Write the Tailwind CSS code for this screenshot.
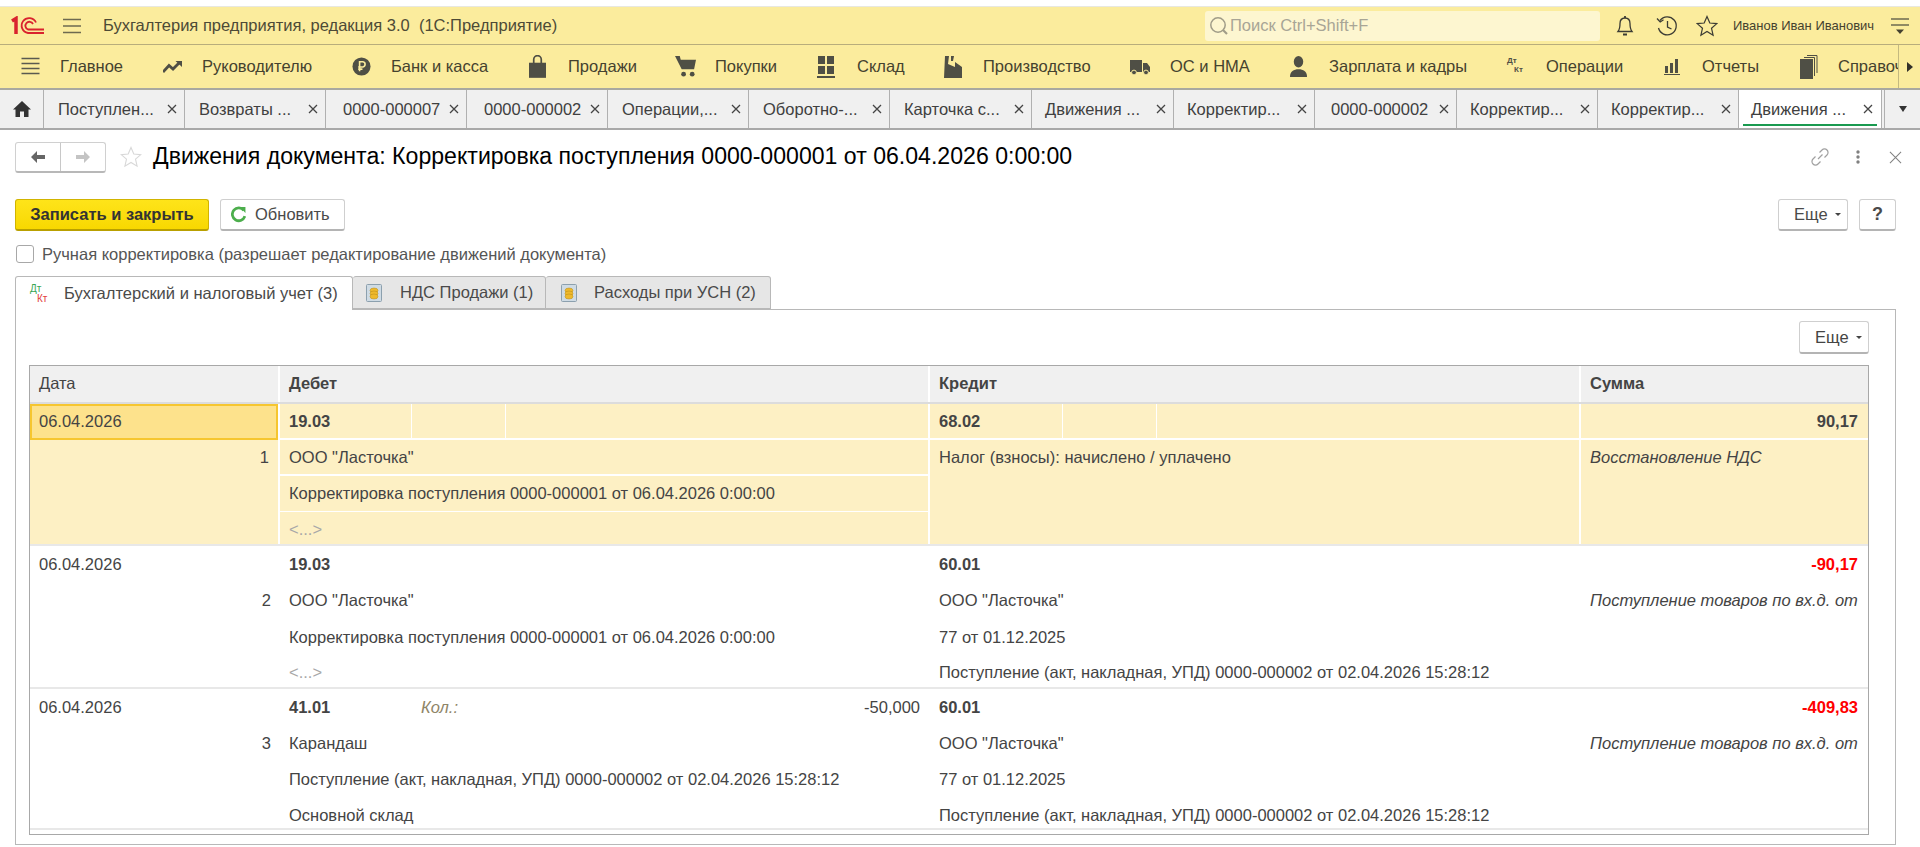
<!DOCTYPE html>
<html lang="ru">

<head>
    <meta charset="UTF-8">
    <title>Бухгалтерия предприятия</title>
    <script src="https://cdn.jsdelivr.net/npm/@tailwindcss/browser@4"></script>
</head>

<body class="font-['Liberation_Sans',Arial,sans-serif] text-[#4a4a4a] bg-white overflow-hidden">
    <div class="h-[847px] w-[1920px] flex flex-col">
        <div class="h-[6px] bg-white"></div>

        <!-- top bar -->
        <div class="h-[39px] bg-[#fbec9d] border-t border-t-[#e8e8e0] border-b border-b-[#b8ad7c] flex items-center shrink-0">
            <svg viewBox="0 0 34 20" class="w-[34px] h-[20px] ml-[11px]" fill="none" stroke="#d9232e">
                <path d="M1 5 L5 2.5 V18" stroke-width="3.5" />
                <path d="M25 6.5 A7.5 7.5 0 1 0 17 17 H33" stroke-width="1.8" />
                <path d="M22 8 A4 4 0 1 0 17 13.5 H33" stroke-width="1.8" />
            </svg>
            <svg viewBox="0 0 18 16" class="w-[18px] h-[16px] ml-[18px]" stroke="#6e6a50" stroke-width="1.5">
                <path d="M0 1.5H18M0 8H18M0 14.5H18" />
            </svg>
            <div class="ml-[22px] text-[16.5px] text-[#4d4a36] whitespace-pre">Бухгалтерия предприятия, редакция 3.0  (1С:Предприятие)</div>
            <div class="ml-auto w-[395px] h-[30px] bg-[#fdf6d0] rounded-[3px] flex items-center pl-[4px] text-[16.5px] text-[#a8a596]">
                <svg viewBox="0 0 20 20" class="w-[20px] h-[20px]" fill="none" stroke="#a09c88" stroke-width="1.5">
                    <circle cx="9" cy="9" r="7.2" />
                    <path d="M14 14 L18 18" stroke-width="2.2" />
                </svg>
                <span class="ml-[1px]">Поиск Ctrl+Shift+F</span>
            </div>
            <svg viewBox="0 0 20 22" class="w-[20px] h-[22px] ml-[15px]" fill="none" stroke="#3c3c34" stroke-width="1.3">
                <path d="M3 16.5 C5 14 5 11 5 8.5 C5 5 7 3 10 3 C13 3 15 5 15 8.5 C15 11 15 14 17 16.5 Z" />
                <path d="M10 1V3M8 19.5H12" stroke-width="1.8" />
            </svg>
            <svg viewBox="0 0 22 22" class="w-[22px] h-[22px] ml-[21px]" fill="none" stroke="#3c3c34" stroke-width="1.3">
                <path d="M4 5.5 A9 9 0 1 1 2.5 13" />
                <path d="M1 3.5 L4.2 7 L7.5 4.8" />
                <path d="M11.5 6V12L15.5 14" />
            </svg>
            <svg viewBox="0 0 22 22" class="w-[22px] h-[22px] ml-[18px]" fill="none" stroke="#3c3c34" stroke-width="1.2">
                <path d="M11 1.5 L13.8 8 L20.8 8.6 L15.5 13.2 L17.1 20.2 L11 16.5 L4.9 20.2 L6.5 13.2 L1.2 8.6 L8.2 8 Z" />
            </svg>
            <div class="ml-[15px] w-[158px] text-[13px] text-[#45422f] whitespace-nowrap">Иванов Иван Иванович</div>
            <svg viewBox="0 0 18 18" class="w-[18px] h-[18px] mr-[11px]" stroke="#6e6a50" stroke-width="1.5">
                <path d="M0 2H18M0 8H18" />
                <path d="M5 12.5H13L9 17Z" fill="#45422f" stroke="none" />
            </svg>
        </div>

        <!-- sections -->
        <div class="h-[45px] bg-[#fbec9d] border-b-2 border-b-[#a9a9a0] flex items-center text-[16.5px] text-[#45422f] shrink-0 pl-[21px] relative">
            <div class="w-[142px] flex items-center shrink-0">
                <svg viewBox="0 0 18 20" class="w-[19px] h-[20px]" stroke="#5a5a50" stroke-width="1.5">
                    <path d="M0 1.5H18M0 6.5H18M0 11.5H18M0 16.5H18" />
                </svg>
                <span class="ml-[20px]">Главное</span>
            </div>
            <div class="w-[189px] flex items-center shrink-0">
                <svg viewBox="0 0 20 20" class="w-[20px] h-[20px]" fill="none" stroke="#4f4f45" stroke-width="2.8">
                    <path d="M0 15 L6 8.5 L10 12 L17 5" />
                    <path d="M12.5 4H19V10" fill="#4f4f45" stroke="none" />
                </svg>
                <span class="ml-[19px]">Руководителю</span>
            </div>
            <div class="w-[177px] flex items-center shrink-0">
                <svg viewBox="0 0 20 20" class="w-[19px] h-[19px]">
                    <circle cx="10" cy="10" r="9.5" fill="#4f4f45" />
                    <path d="M8 15V5H11.5A2.8 2.8 0 0 1 11.5 10.5H6.5M6.5 12.8H11" fill="none" stroke="#fbec9d" stroke-width="1.7" />
                </svg>
                <span class="ml-[20px]">Банк и касса</span>
            </div>
            <div class="w-[146px] flex items-center shrink-0">
                <svg viewBox="0 0 18 24" class="w-[17px] h-[23px]">
                    <path d="M0 8H18V24H0Z" fill="#4f4f45" />
                    <path d="M5 11V4.5A4 4 0 0 1 13 4.5V11" fill="none" stroke="#4f4f45" stroke-width="1.8" />
                </svg>
                <span class="ml-[22px]">Продажи</span>
            </div>
            <div class="w-[142px] flex items-center shrink-0">
                <svg viewBox="0 0 22 22" class="w-[21px] h-[21px]">
                    <path d="M0 0H5L6 4H22L20 14H7Z" fill="#4f4f45" />
                    <circle cx="9" cy="19" r="2.5" fill="#4f4f45" />
                    <circle cx="18" cy="19" r="2.5" fill="#4f4f45" />
                </svg>
                <span class="ml-[19px]">Покупки</span>
            </div>
            <div class="w-[127px] flex items-center shrink-0">
                <svg viewBox="0 0 18 22" class="w-[18px] h-[22px]" fill="#4f4f45">
                    <path d="M1 0H8V8H1ZM10 0H17V8H10ZM1 10H8V18H1ZM10 10H17V18H10ZM0 20H18V22H0Z" />
                </svg>
                <span class="ml-[22px]">Склад</span>
            </div>
            <div class="w-[186px] flex items-center shrink-0">
                <svg viewBox="0 0 18 22" class="w-[18px] h-[22px]" fill="#4f4f45">
                    <path d="M1 0H5L4 8L11 11V6L18 11V22H0Z" />
                    <path d="M7 0H10L9 5H7Z" />
                </svg>
                <span class="ml-[21px]">Производство</span>
            </div>
            <div class="w-[160px] flex items-center shrink-0">
                <svg viewBox="0 0 20 16" class="w-[20px] h-[16px]" fill="#4f4f45">
                    <path d="M0 1H12V13H0ZM13 4H17L20 8V13H13Z" />
                    <circle cx="4" cy="13.5" r="2.4" stroke="#fbec9d" />
                    <circle cx="16" cy="13.5" r="2.4" stroke="#fbec9d" />
                </svg>
                <span class="ml-[20px]">ОС и НМА</span>
            </div>
            <div class="w-[217px] flex items-center shrink-0">
                <svg viewBox="0 0 18 22" class="w-[17px] h-[21px]" fill="#4f4f45">
                    <ellipse cx="9" cy="6" rx="5" ry="6" />
                    <path d="M0 22C0 16 4 14 9 14C14 14 18 16 18 22Z" />
                </svg>
                <span class="ml-[22px]">Зарплата и кадры</span>
            </div>
            <div class="w-[157px] flex items-center shrink-0">
                <div class="w-[18px] h-[22px] text-[8px] font-bold leading-[9px] text-[#4f4f45]">
                    <div>Дт</div>
                    <div class="pl-[7px]">Кт</div>
                </div>
                <span class="ml-[21px]">Операции</span>
            </div>
            <div class="w-[136px] flex items-center shrink-0">
                <svg viewBox="0 0 16 16" class="w-[16px] h-[16px]" fill="#4f4f45">
                    <path d="M1 7H4V14H1ZM6 4H9V14H6ZM11 0H14V14H11ZM0 15H16V16H0Z" />
                </svg>
                <span class="ml-[22px]">Отчеты</span>
            </div>
            <div class="flex items-center shrink-0">
                <svg viewBox="0 0 18 24" class="w-[18px] h-[24px]">
                    <path d="M0 4H13V24H0Z" fill="#4f4f45" />
                    <path d="M14.5 21V2.5H4M17 18V0.5H7" fill="none" stroke="#4f4f45" />
                </svg>
                <span class="ml-[20px] w-[60px] overflow-hidden whitespace-nowrap">Справочники</span>
            </div>
            <div class="absolute right-0 top-0 bottom-0 w-[22px] bg-[#fbec9d] border-l border-l-[#c4b97f] flex items-center justify-center">
                <svg viewBox="0 0 6 10" class="w-[6px] h-[10px]" fill="#33312a">
                    <path d="M0 0L6 5L0 10Z" />
                </svg>
            </div>
        </div>

        <!-- open tabs -->
        <div class="h-[40px] bg-[#f0f0f0] border-b-2 border-b-[#a9a9a9] flex text-[16.5px] text-[#404040] shrink-0 whitespace-nowrap">
            <div class="w-[44px] border-r border-r-[#b0b0b0] flex items-center justify-center">
                <svg viewBox="0 0 18 16" class="w-[18px] h-[16px]" fill="#333">
                    <path d="M9 0L18 8.5H15.5V16H11V10.5H7V16H2.5V8.5H0Z" />
                </svg>
            </div>
            <div class="w-[141px] border-r border-r-[#b0b0b0] flex items-center justify-between pl-[14px] pr-[7px]"><span>Поступлен...</span><svg viewBox="0 0 10 10" class="w-[10px] h-[10px]" stroke="#444" stroke-width="1.3"><path d="M1 1L9 9M9 1L1 9" /></svg></div>
            <div class="w-[141px] border-r border-r-[#b0b0b0] flex items-center justify-between pl-[14px] pr-[7px]"><span>Возвраты ...</span><svg viewBox="0 0 10 10" class="w-[10px] h-[10px]" stroke="#444" stroke-width="1.3"><path d="M1 1L9 9M9 1L1 9" /></svg></div>
            <div class="w-[141px] border-r border-r-[#b0b0b0] flex items-center justify-between pl-[17px] pr-[7px]"><span>0000-000007</span><svg viewBox="0 0 10 10" class="w-[10px] h-[10px]" stroke="#444" stroke-width="1.3"><path d="M1 1L9 9M9 1L1 9" /></svg></div>
            <div class="w-[141px] border-r border-r-[#b0b0b0] flex items-center justify-between pl-[17px] pr-[7px]"><span>0000-000002</span><svg viewBox="0 0 10 10" class="w-[10px] h-[10px]" stroke="#444" stroke-width="1.3"><path d="M1 1L9 9M9 1L1 9" /></svg></div>
            <div class="w-[141px] border-r border-r-[#b0b0b0] flex items-center justify-between pl-[14px] pr-[7px]"><span>Операции,...</span><svg viewBox="0 0 10 10" class="w-[10px] h-[10px]" stroke="#444" stroke-width="1.3"><path d="M1 1L9 9M9 1L1 9" /></svg></div>
            <div class="w-[141px] border-r border-r-[#b0b0b0] flex items-center justify-between pl-[14px] pr-[7px]"><span>Оборотно-...</span><svg viewBox="0 0 10 10" class="w-[10px] h-[10px]" stroke="#444" stroke-width="1.3"><path d="M1 1L9 9M9 1L1 9" /></svg></div>
            <div class="w-[142px] border-r border-r-[#b0b0b0] flex items-center justify-between pl-[14px] pr-[7px]"><span>Карточка с...</span><svg viewBox="0 0 10 10" class="w-[10px] h-[10px]" stroke="#444" stroke-width="1.3"><path d="M1 1L9 9M9 1L1 9" /></svg></div>
            <div class="w-[142px] border-r border-r-[#b0b0b0] flex items-center justify-between pl-[13px] pr-[7px]"><span>Движения ...</span><svg viewBox="0 0 10 10" class="w-[10px] h-[10px]" stroke="#444" stroke-width="1.3"><path d="M1 1L9 9M9 1L1 9" /></svg></div>
            <div class="w-[141px] border-r border-r-[#b0b0b0] flex items-center justify-between pl-[13px] pr-[7px]"><span>Корректир...</span><svg viewBox="0 0 10 10" class="w-[10px] h-[10px]" stroke="#444" stroke-width="1.3"><path d="M1 1L9 9M9 1L1 9" /></svg></div>
            <div class="w-[142px] border-r border-r-[#b0b0b0] flex items-center justify-between pl-[16px] pr-[7px]"><span>0000-000002</span><svg viewBox="0 0 10 10" class="w-[10px] h-[10px]" stroke="#444" stroke-width="1.3"><path d="M1 1L9 9M9 1L1 9" /></svg></div>
            <div class="w-[141px] border-r border-r-[#b0b0b0] flex items-center justify-between pl-[13px] pr-[7px]"><span>Корректир...</span><svg viewBox="0 0 10 10" class="w-[10px] h-[10px]" stroke="#444" stroke-width="1.3"><path d="M1 1L9 9M9 1L1 9" /></svg></div>
            <div class="w-[141px] border-r border-r-[#b0b0b0] flex items-center justify-between pl-[13px] pr-[7px]"><span>Корректир...</span><svg viewBox="0 0 10 10" class="w-[10px] h-[10px]" stroke="#444" stroke-width="1.3"><path d="M1 1L9 9M9 1L1 9" /></svg></div>
            <div class="w-[143px] bg-white border-r border-r-[#b0b0b0] flex items-center justify-between pl-[12px] pr-[8px] relative"><span>Движения ...</span><svg viewBox="0 0 10 10" class="w-[10px] h-[10px]" stroke="#444" stroke-width="1.3"><path d="M1 1L9 9M9 1L1 9" /></svg><div class="absolute left-[4px] right-[4px] bottom-[2px] h-[2px] bg-[#1a9a50]"></div></div>
            <div class="flex-1 border-l border-l-[#b0b0b0] ml-[2px] flex items-center justify-center">
                <svg viewBox="0 0 8 6" class="w-[8px] h-[6px]" fill="#333"><path d="M0 0H8L4 6Z" /></svg>
            </div>
        </div>

        <!-- form -->
        <div class="flex-1 flex flex-col px-[15px] pr-[24px] relative">
            <div class="h-[54px] flex items-center shrink-0">
                <div class="w-[91px] h-[31px] border border-[#d0d0d0] border-b-2 border-b-[#b8b8b8] rounded-[3px] flex shrink-0">
                    <div class="w-[45px] border-r border-r-[#c8c8c8] flex items-center justify-center">
                        <svg viewBox="0 0 14 12" class="w-[14px] h-[12px]" fill="#666"><path d="M0 6L6 0V4H14V8H6V12Z" /></svg>
                    </div>
                    <div class="flex-1 flex items-center justify-center">
                        <svg viewBox="0 0 14 12" class="w-[14px] h-[12px]" fill="#c4c4c4"><path d="M14 6L8 0V4H0V8H8V12Z" /></svg>
                    </div>
                </div>
                <svg viewBox="0 0 22 22" class="w-[22px] h-[22px] ml-[14px]" fill="none" stroke="#d8d8d8" stroke-width="1.1">
                    <path d="M11 1.5 L13.8 8 L20.8 8.6 L15.5 13.2 L17.1 20.2 L11 16.5 L4.9 20.2 L6.5 13.2 L1.2 8.6 L8.2 8 Z" />
                </svg>
                <h1 class="ml-[11px] mb-[1px] text-[23.1px] text-black whitespace-nowrap">Движения документа: Корректировка поступления 0000-000001 от 06.04.2026 0:00:00</h1>
                <div class="ml-auto flex items-center">
                    <svg viewBox="0 0 20 20" class="w-[20px] h-[20px]" fill="none" stroke="#a0a0a0" stroke-width="1.2">
                        <path d="M8 12 L12.5 7.5 M9.5 5.5 L12 3 A3.5 3.5 0 0 1 17 8 L14.5 10.5 M10.5 14.5 L8 17 A3.5 3.5 0 0 1 3 12 L5.5 9.5" />
                    </svg>
                    <svg viewBox="0 0 4 14" class="w-[4px] h-[14px] ml-[26px]" fill="#808080">
                        <circle cx="2" cy="2" r="1.7" /><circle cx="2" cy="7" r="1.7" /><circle cx="2" cy="12" r="1.7" />
                    </svg>
                    <svg viewBox="0 0 14 14" class="w-[13px] h-[13px] ml-[29px] mr-[-6px]" stroke="#808080" stroke-width="1.1">
                        <path d="M1 1L13 13M13 1L1 13" />
                    </svg>
                </div>
            </div>

            <div class="h-[15px] shrink-0"></div>

            <div class="h-[32px] flex items-stretch shrink-0 text-[16.5px]">
                <div class="w-[194px] bg-[#fbdb0e] bg-gradient-to-b from-[#fee419] to-[#f8d800] border border-[#d1b400] border-b-2 border-b-[#b9a000] rounded-[3px] flex items-center justify-center font-bold text-[#333]">Записать и закрыть</div>
                <div class="w-[125px] ml-[11px] border border-[#cfcfcf] border-b-2 border-b-[#b4b4b4] rounded-[3px] flex items-center pl-[10px]">
                    <svg viewBox="0 0 14 16" class="w-[15px] h-[17px]" fill="none" stroke="#4cae4c" stroke-width="2.6">
                        <path d="M12 4.2 A6 6 0 1 0 13 9.5" />
                        <path d="M8.5 1 H13.5 V6.5 Z" fill="#4cae4c" stroke="none" />
                    </svg>
                    <span class="ml-[9px]">Обновить</span>
                </div>
                <div class="ml-auto w-[70px] border border-[#cfcfcf] border-b-2 border-b-[#b4b4b4] rounded-[3px] flex items-center pl-[15px]">Еще<svg viewBox="0 0 6 3" class="w-[6px] h-[3px] ml-[7px]" fill="#444"><path d="M0 0H6L3 3Z" /></svg></div>
                <div class="ml-[11px] w-[37px] border border-[#cfcfcf] border-b-2 border-b-[#b4b4b4] rounded-[3px] flex items-center justify-center font-bold text-[18px]">?</div>
            </div>

            <div class="h-[14px] shrink-0"></div>

            <div class="h-[18px] flex items-center shrink-0 text-[16.5px] text-[#555]">
                <div class="w-[18px] h-[18px] border border-[#a8a8a8] rounded-[3px] ml-[1px]"></div>
                <span class="ml-[8px]">Ручная корректировка (разрешает редактирование движений документа)</span>
            </div>

            <div class="h-[13px] shrink-0"></div>

            <!-- register tabs -->
            <div class="h-[33px] flex shrink-0 text-[16.5px] relative z-10">
                <div class="w-[338px] h-[34px] bg-white border border-[#b8b8b8] border-b-0 rounded-t-[3px] flex items-center pl-[14px]">
                    <div class="w-[20px] text-[10px] leading-[10px]">
                        <div class="text-[#3aa655]">Дт</div>
                        <div class="pl-[7px] text-[#e2403c]">Кт</div>
                    </div>
                    <span class="ml-[14px]">Бухгалтерский и налоговый учет (3)</span>
                </div>
                <div class="w-[193px] bg-[#e6e6e6] border border-l-0 border-[#b8b8b8] rounded-t-[3px] flex items-center pl-[13px]">
                    <svg viewBox="0 0 16 18" class="w-[16px] h-[18px]">
                        <rect x="0.5" y="0.5" width="15" height="17" rx="1" fill="#cfdbe4" stroke="#8ca0ae" />
                        <ellipse cx="8" cy="6.5" rx="4" ry="2.5" fill="#eeb92c" stroke="#b88a14" stroke-width="0.5" />
                        <ellipse cx="8" cy="9.5" rx="4" ry="2.5" fill="#eeb92c" stroke="#b88a14" stroke-width="0.5" />
                        <ellipse cx="8" cy="12.5" rx="4" ry="2.5" fill="#eeb92c" stroke="#b88a14" stroke-width="0.5" />
                    </svg>
                    <span class="ml-[18px]">НДС Продажи (1)</span>
                </div>
                <div class="w-[225px] bg-[#e6e6e6] border border-l-0 border-[#b8b8b8] rounded-t-[3px] flex items-center pl-[15px]">
                    <svg viewBox="0 0 16 18" class="w-[16px] h-[18px]">
                        <rect x="0.5" y="0.5" width="15" height="17" rx="1" fill="#cfdbe4" stroke="#8ca0ae" />
                        <ellipse cx="8" cy="6.5" rx="4" ry="2.5" fill="#eeb92c" stroke="#b88a14" stroke-width="0.5" />
                        <ellipse cx="8" cy="9.5" rx="4" ry="2.5" fill="#eeb92c" stroke="#b88a14" stroke-width="0.5" />
                        <ellipse cx="8" cy="12.5" rx="4" ry="2.5" fill="#eeb92c" stroke="#b88a14" stroke-width="0.5" />
                    </svg>
                    <span class="ml-[17px]">Расходы при УСН (2)</span>
                </div>
            </div>

            <!-- register panel -->
            <div class="h-[536px] border border-[#b8b8b8] px-[13px] pr-[26px] flex flex-col shrink-0 text-[16.5px] text-[#444] whitespace-nowrap">
                <div class="h-[55px] shrink-0 flex justify-end items-start pt-[11px]">
                    <div class="w-[70px] h-[33px] border border-[#cfcfcf] border-b-2 border-b-[#b4b4b4] rounded-[3px] flex items-center pl-[15px]">Еще<svg viewBox="0 0 6 3" class="w-[6px] h-[3px] ml-[7px]" fill="#444"><path d="M0 0H6L3 3Z" /></svg></div>
                </div>

                <div class="h-[470px] border border-[#a8a8a8] flex flex-col shrink-0">
                    <!-- header -->
                    <div class="h-[38px] bg-[#f0f0f0] border-b-2 border-b-[#dcdcdc] flex items-center shrink-0">
                        <div class="w-[250px] h-full pl-[9px] pb-[2px] flex items-center border-r-2 border-r-white">Дата</div>
                        <div class="w-[650px] h-full pl-[9px] pb-[2px] flex items-center font-bold border-r-2 border-r-white">Дебет</div>
                        <div class="w-[651px] h-full pl-[9px] pb-[2px] flex items-center font-bold border-r-2 border-r-white">Кредит</div>
                        <div class="flex-1 h-full pl-[9px] pb-[2px] flex items-center font-bold">Сумма</div>
                    </div>

                    <!-- record 1 -->
                    <div class="h-[142px] flex bg-[#fdf0c4] border-b-2 border-b-[#e8e8e8] shrink-0">
                        <div class="w-[250px] flex flex-col border-r-2 border-r-white">
                            <div class="h-[36px] bg-[#fde28c] border-2 border-[#f6c62f] pl-[7px] pb-[1px] flex items-center">06.04.2026</div>
                            <div class="h-[36px] pb-[2px] pr-[9px] flex items-center justify-end">1</div>
                        </div>
                        <div class="w-[650px] flex flex-col border-r-2 border-r-white">
                            <div class="h-[36px] flex border-b-2 border-b-white">
                                <div class="w-[132px] pl-[9px] flex items-center font-bold border-r border-r-white">19.03</div>
                                <div class="w-[94px] border-r border-r-white"></div>
                            </div>
                            <div class="h-[36px] pl-[9px] flex items-center border-b-2 border-b-white">ООО "Ласточка"</div>
                            <div class="h-[36px] pl-[9px] flex items-center border-b border-b-white">Корректировка поступления 0000-000001 от 06.04.2026 0:00:00</div>
                            <div class="flex-1 pl-[9px] pt-[2px] flex items-center text-[#a8a8a8]">&lt;...&gt;</div>
                        </div>
                        <div class="w-[651px] flex flex-col border-r-2 border-r-white">
                            <div class="h-[36px] flex border-b-2 border-b-white">
                                <div class="w-[133px] pl-[9px] flex items-center font-bold border-r border-r-white">68.02</div>
                                <div class="w-[94px] border-r border-r-white"></div>
                            </div>
                            <div class="h-[36px] pl-[9px] pb-[2px] flex items-center">Налог (взносы): начислено / уплачено</div>
                        </div>
                        <div class="flex-1 flex flex-col">
                            <div class="h-[36px] pr-[10px] flex items-center justify-end font-bold border-b-2 border-b-white">90,17</div>
                            <div class="h-[36px] pl-[9px] pb-[2px] flex items-center italic">Восстановление НДС</div>
                        </div>
                    </div>

                    <!-- record 2 -->
                    <div class="h-[143px] flex border-b-2 border-b-[#e8e8e8] shrink-0">
                        <div class="w-[250px] flex flex-col">
                            <div class="h-[36px] pl-[9px] flex items-center">06.04.2026</div>
                            <div class="h-[36px] pr-[9px] flex items-center justify-end">2</div>
                        </div>
                        <div class="w-[650px] flex flex-col">
                            <div class="h-[36px] pl-[9px] flex items-center font-bold">19.03</div>
                            <div class="h-[36px] pl-[9px] flex items-center">ООО "Ласточка"</div>
                            <div class="h-[36px] pl-[9px] pt-[2px] flex items-center">Корректировка поступления 0000-000001 от 06.04.2026 0:00:00</div>
                            <div class="h-[33px] pl-[9px] pt-[4px] flex items-center text-[#a8a8a8]">&lt;...&gt;</div>
                        </div>
                        <div class="w-[651px] flex flex-col">
                            <div class="h-[36px] pl-[9px] flex items-center font-bold">60.01</div>
                            <div class="h-[36px] pl-[9px] flex items-center">ООО "Ласточка"</div>
                            <div class="h-[36px] pl-[9px] pt-[2px] flex items-center">77 от 01.12.2025</div>
                            <div class="h-[33px] pl-[9px] pt-[4px] flex items-center">Поступление (акт, накладная, УПД) 0000-000002 от 02.04.2026 15:28:12</div>
                        </div>
                        <div class="flex-1 flex flex-col">
                            <div class="h-[36px] pr-[10px] flex items-center justify-end font-bold text-[#ff0000]">-90,17</div>
                            <div class="h-[36px] pl-[9px] flex items-center italic">Поступление товаров по вх.д. от</div>
                        </div>
                    </div>

                    <!-- record 3 -->
                    <div class="h-[141px] flex border-b-2 border-b-[#e8e8e8] shrink-0">
                        <div class="w-[250px] flex flex-col">
                            <div class="h-[36px] pl-[9px] flex items-center">06.04.2026</div>
                            <div class="h-[36px] pr-[9px] flex items-center justify-end">3</div>
                        </div>
                        <div class="w-[650px] flex flex-col">
                            <div class="h-[36px] pl-[9px] pr-[10px] flex items-center">
                                <span class="w-[132px] font-bold">41.01</span>
                                <span class="italic text-[#8f8568]">Кол.:</span>
                                <span class="ml-auto">-50,000</span>
                            </div>
                            <div class="h-[36px] pl-[9px] flex items-center">Карандаш</div>
                            <div class="h-[36px] pl-[9px] flex items-center">Поступление (акт, накладная, УПД) 0000-000002 от 02.04.2026 15:28:12</div>
                            <div class="h-[31px] pl-[9px] pt-[5px] flex items-center">Основной склад</div>
                        </div>
                        <div class="w-[651px] flex flex-col">
                            <div class="h-[36px] pl-[9px] flex items-center font-bold">60.01</div>
                            <div class="h-[36px] pl-[9px] flex items-center">ООО "Ласточка"</div>
                            <div class="h-[36px] pl-[9px] flex items-center">77 от 01.12.2025</div>
                            <div class="h-[31px] pl-[9px] pt-[5px] flex items-center">Поступление (акт, накладная, УПД) 0000-000002 от 02.04.2026 15:28:12</div>
                        </div>
                        <div class="flex-1 flex flex-col">
                            <div class="h-[36px] pr-[10px] flex items-center justify-end font-bold text-[#ff0000]">-409,83</div>
                            <div class="h-[36px] pl-[9px] flex items-center italic">Поступление товаров по вх.д. от</div>
                        </div>
                    </div>
                </div>
            </div>
        </div>
    </div>
</body>

</html>
